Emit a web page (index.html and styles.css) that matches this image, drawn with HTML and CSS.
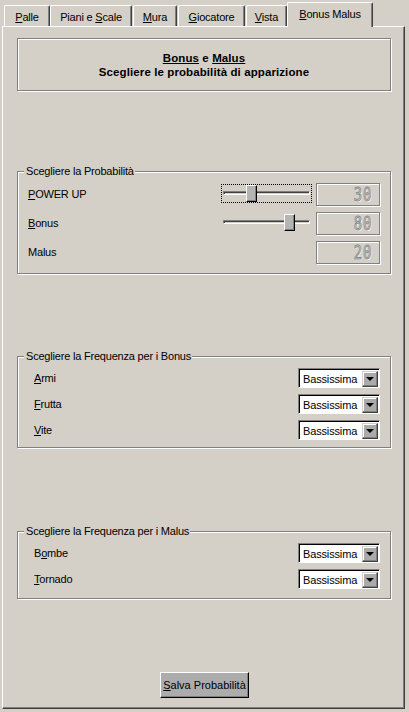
FILE: index.html
```html
<!DOCTYPE html>
<html lang="it">
<head>
<meta charset="utf-8">
<title>Bonus Malus</title>
<link rel="stylesheet" href="styles.css">
</head>
<body>
<div class="tabs">
  <div class="tab t1"><span><u>P</u>alle</span></div>
  <div class="tab t2"><span>Piani e <u>S</u>cale</span></div>
  <div class="tab t3"><span><u>M</u>ura</span></div>
  <div class="tab t4"><span><u>G</u>iocatore</span></div>
  <div class="tab t5"><span><u>V</u>ista</span></div>
  <div class="tab t6 active"><span><u>B</u>onus Malus</span></div>
</div>
<div class="panel">
  <div class="header etched">
    <div><u>Bonus</u> e <u>Malus</u></div>
    <div>Scegliere le probabilità di apparizione</div>
  </div>

  <div class="group etched g1">
    <span class="legend">Scegliere la Probabilità</span>
    <div class="row prow">
      <span class="lbl"><u>P</u>OWER UP</span>
      <div class="slider focus"><div class="track"></div><div class="thumb" style="left:24px"></div></div>
      <div class="lcd etched"><span>30</span></div>
    </div>
    <div class="row prow">
      <span class="lbl"><u>B</u>onus</span>
      <div class="slider"><div class="track"></div><div class="thumb" style="left:62px"></div></div>
      <div class="lcd etched"><span>80</span></div>
    </div>
    <div class="row prow">
      <span class="lbl">Malus</span>
      <div class="lcd etched"><span>20</span></div>
    </div>
  </div>

  <div class="group etched g2">
    <span class="legend">Scegliere la Frequenza per i Bonus</span>
    <div class="row crow"><span class="lbl"><u>A</u>rmi</span><div class="combo"><span class="val">Bassissima</span><span class="btn"><i></i></span></div></div>
    <div class="row crow"><span class="lbl"><u>F</u>rutta</span><div class="combo"><span class="val">Bassissima</span><span class="btn"><i></i></span></div></div>
    <div class="row crow"><span class="lbl"><u>V</u>ite</span><div class="combo"><span class="val">Bassissima</span><span class="btn"><i></i></span></div></div>
  </div>

  <div class="group etched g3">
    <span class="legend">Scegliere la Frequenza per i Malus</span>
    <div class="row crow"><span class="lbl">B<u>o</u>mbe</span><div class="combo"><span class="val">Bassissima</span><span class="btn"><i></i></span></div></div>
    <div class="row crow"><span class="lbl"><u>T</u>ornado</span><div class="combo"><span class="val">Bassissima</span><span class="btn"><i></i></span></div></div>
  </div>

  <div class="actions">
    <button class="save"><u>S</u>alva Probabilità</button>
  </div>
</div>
</body>
</html>
```

FILE: styles.css
```css
* { box-sizing: border-box; }
html, body { margin: 0; padding: 0; }
body {
  background: #d4d0c8;
  font-family: "Liberation Sans", Arial, sans-serif;
  font-size: 11px;
  letter-spacing: -0.2px;
  color: #000;
  width: 409px;
  height: 712px;
  overflow: hidden;
}
u { text-decoration: underline; text-underline-offset: 1px; }

.tabs {
  display: flex;
  align-items: flex-end;
  height: 26px;
  padding-left: 4px;
  position: relative;
  z-index: 2;
}
.tab {
  height: 21px;
  border-top: 1px solid #fff;
  border-left: 1px solid #fff;
  border-right: 1px solid #404040;
  box-shadow: inset -1px 0 0 #808080;
  border-radius: 2px 2px 0 0;
  display: flex;
  align-items: center;
  justify-content: center;
  padding-top: 1px;
  white-space: nowrap;
}
.t1 { width: 46px; }
.t2 { width: 82px; }
.t3 { width: 44px; margin-left: 1px; }
.t4 { width: 67px; margin-left: 1px; }
.t5 { width: 41px; margin-left: 1px; }
.t6 { width: 86px; }
.tab.active {
  height: 25px;
  margin-bottom: -1px;
  background: #d4d0c8;
  padding-top: 0;
  padding-bottom: 3px;
}

.panel {
  width: 403px;
  height: 683px;
  margin-left: 2px;
  border-top: 1px solid #fff;
  border-left: 1px solid #fff;
  border-right: 1px solid #404040;
  border-bottom: 1px solid #404040;
  box-shadow: inset -1px -1px 0 #808080;
  padding: 0 13px 0 14px;
  display: flex;
  flex-direction: column;
}

.etched {
  border: 1px solid #808080;
  box-shadow: 1px 1px 0 #fff, inset 1px 1px 0 #fff;
}

.header {
  margin-top: 11px;
  height: 53px;
  width: 374px;
  padding-top: 12px;
  text-align: center;
  font-weight: bold;
  font-size: 11.5px;
  letter-spacing: 0.1px;
  line-height: 14px;
}

.group {
  width: 374px;
  position: relative;
  display: flex;
  flex-direction: column;
}
.legend {
  position: absolute;
  top: -8px;
  left: 6px;
  padding: 0 1px 0 2px;
  background: #d4d0c8;
  line-height: 14px;
}
.g1 { margin-top: 80px; height: 103px; padding: 11px 10px 0 10px; gap: 7px; }
.g2 { margin-top: 82px; height: 92px; padding: 11px 10px 0 16px; gap: 6px; }
.g3 { margin-top: 83px; height: 68px; padding: 11px 10px 0 16px; gap: 6px; }

.row {
  display: flex;
  align-items: center;
}
.prow { height: 22px; }
.crow { height: 20px; }
.lbl { flex: 1; }

.slider {
  position: relative;
  width: 89px;
  height: 17px;
  margin-right: 5px;
  margin-top: -1px;
}
.slider.focus { outline: 1px dotted #000; outline-offset: 0; }
.track {
  position: absolute;
  left: 1px;
  right: 1px;
  top: 6px;
  height: 4px;
  border-top: 1px solid #808080;
  border-left: 1px solid #808080;
  border-bottom: 1px solid #fff;
  border-right: 1px solid #fff;
  box-shadow: inset 1px 1px 0 #404040;
  background: #d4d0c8;
}
.thumb {
  position: absolute;
  top: 0;
  width: 11px;
  height: 17px;
  background: #b4b4b4;
  border-top: 1px solid #fff;
  border-left: 1px solid #fff;
  border-right: 1px solid #000;
  border-bottom: 1px solid #000;
  box-shadow: inset -1px -1px 0 #808080;
}

.lcd {
  width: 64px;
  height: 23px;
  display: flex;
  align-items: center;
  justify-content: flex-end;
  padding-right: 7px;
  overflow: hidden;
}
.lcd span {
  font-family: "DejaVu Sans Mono", monospace;
  font-size: 20px;
  line-height: 20px;
  letter-spacing: 1px;
  color: #d4d0c8;
  -webkit-text-stroke: 1px #8a8a8a;
  transform: scaleX(0.7);
  transform-origin: right center;
  text-shadow: 1px 1px 0 #fff;
}

.combo {
  width: 82px;
  height: 20px;
  border-top: 1px solid #808080;
  border-left: 1px solid #808080;
  border-right: 1px solid #fff;
  border-bottom: 1px solid #fff;
  box-shadow: inset 1px 1px 0 #000;
  background: #fff;
  display: flex;
  align-items: center;
  padding: 1px 1px 0 4px;
}
.combo .val { flex: 1; font-size: 11px; letter-spacing: -0.15px; }
.combo .btn {
  width: 16px;
  height: 16px;
  background: #aaa;
  border-top: 1px solid #d4d0c8;
  border-left: 1px solid #d4d0c8;
  border-right: 1px solid #404040;
  border-bottom: 1px solid #404040;
  box-shadow: inset -1px -1px 0 #808080, inset 1px 1px 0 #fff;
  display: flex;
  align-items: center;
  justify-content: center;
}
.combo .btn i {
  width: 0;
  height: 0;
  border-left: 4px solid transparent;
  border-right: 4px solid transparent;
  border-top: 4px solid #000;
  margin-top: 1px;
}

.actions {
  margin-top: 73px;
  display: flex;
  justify-content: center;
  padding-left: 1px;
}
.save {
  width: 89px;
  height: 26px;
  font-family: "Liberation Sans", Arial, sans-serif;
  font-size: 11px;
  letter-spacing: 0;
  color: #000;
  background: #acacac;
  border-top: 1px solid #fff;
  border-left: 1px solid #fff;
  border-right: 1px solid #000;
  border-bottom: 1px solid #000;
  box-shadow: inset -1px -1px 0 #808080;
  padding: 0;
  margin: 0;
}
```
